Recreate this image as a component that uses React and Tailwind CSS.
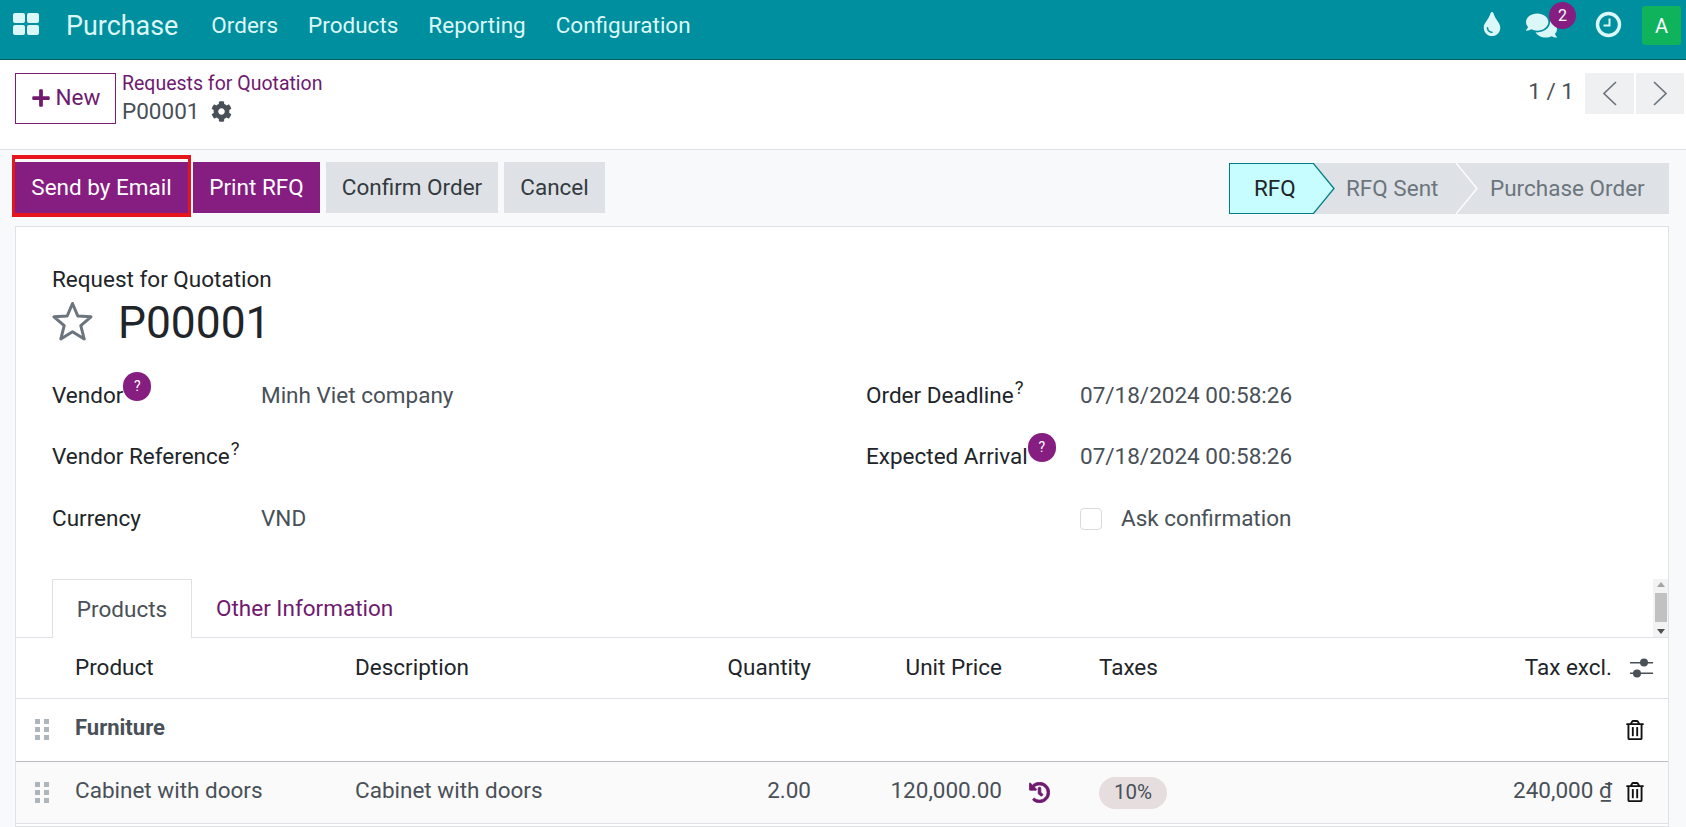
import React from "react";
import { FaPlus, FaCog, FaTint, FaComments, FaHistory, FaRegTrashAlt } from "react-icons/fa";

const Apps = () => (
  <svg width="26" height="22" viewBox="0 0 26 22" fill="#dcf7f7">
    <rect x="0" y="0" width="12" height="10" rx="2" />
    <rect x="14" y="0" width="12" height="10" rx="2" />
    <rect x="0" y="12" width="12" height="10" rx="2" />
    <rect x="14" y="12" width="12" height="10" rx="2" />
  </svg>
);

const Clock = () => (
  <svg width="27" height="27" viewBox="0 0 27 27" fill="none" stroke="#dcf7f7">
    <circle cx="13.5" cy="13.5" r="11" strokeWidth="3.4" />
    <path d="M14.5 7.5V14.5H8.5" strokeWidth="2" />
  </svg>
);

const Star = () => (
  <svg width="41" height="40" viewBox="0 0 41 40" fill="none" stroke="#6c757d" strokeWidth="3" strokeLinejoin="round">
    <path d="M20.5 2.5 25.8 15 39 15.8 28.8 24.6 32.2 38 20.5 30.8 8.8 38 12.2 24.6 2 15.8 15.2 15Z" />
  </svg>
);

const Handle = () => (
  <svg width="14" height="21" viewBox="0 0 14 21" fill="#adb5bd">
    <rect x="0" y="0" width="5" height="5" /><rect x="9" y="0" width="5" height="5" />
    <rect x="0" y="8" width="5" height="5" /><rect x="9" y="8" width="5" height="5" />
    <rect x="0" y="16" width="5" height="5" /><rect x="9" y="16" width="5" height="5" />
  </svg>
);

const Sliders = () => (
  <svg width="23" height="20" viewBox="0 0 23 20" fill="#495057">
    <rect x="0" y="4" width="23" height="1.5" />
    <rect x="0" y="14.5" width="23" height="1.5" />
    <circle cx="14" cy="4.5" r="4" />
    <circle cx="7" cy="15.5" r="4" />
  </svg>
);

const Chevron = ({ dir }) => (
  <svg width="15" height="25" viewBox="0 0 15 25" fill="none" stroke="#6c757d" strokeWidth="1.7">
    <path d={dir === "l" ? "M14 1 2 12.5 14 24" : "M1 1 13 12.5 1 24"} />
  </svg>
);

const Q = () => (
  <span className="absolute left-full top-[-10px] flex h-[29px] w-[28px] items-center justify-center rounded-full bg-[#861d80] text-[14px] text-white">?</span>
);

const Sup = () => <sup className="ml-[1px] text-[18.5px] leading-none">?</sup>;

const Btn = ({ children, primary, className = "" }) => (
  <button className={`flex h-[51px] items-center justify-center text-[22.5px] ${primary ? "bg-[#861d80] text-white" : "bg-[#dee2e6] text-[#343a40]"} ${className}`}>
    {children}
  </button>
);

const rowGrid = "grid grid-cols-[59px_280px_301px_155px_191px_97px_340px_173px_56px] items-center";

export default function App() {
  return (
    <div className="flex h-[827px] w-[1686px] flex-col overflow-hidden bg-white font-['Roboto',sans-serif] text-[22.5px] text-[#212529]">
      {/* Navbar */}
      <header className="flex h-[60px] shrink-0 items-center border-b border-[#00606a] bg-[#008f9e] text-[#dcf7f7]">
        <div className="ml-[13px] mb-[11px]"><Apps /></div>
        <span className="ml-[27px] mb-[6px] text-[26.9px]">Purchase</span>
        <nav className="ml-[33px] mb-[7px] flex gap-[30px]">
          <span>Orders</span><span>Products</span><span>Reporting</span><span>Configuration</span>
        </nav>
        <div className="ml-auto mr-[5px] flex items-center">
          <FaTint className="mb-[12px] text-[24px]" />
          <div className="relative ml-[22px]">
            <FaComments className="mb-[8px] text-[31px]" />
            <span className="absolute left-[23px] top-[-8px] flex h-[27px] w-[27px] items-center justify-center rounded-full bg-[#861d80] text-[16px] text-white">2</span>
          </div>
          <div className="ml-[38px] mb-[10px]"><Clock /></div>
          <span className="ml-[20px] mb-[8px] flex h-[39px] w-[39px] items-center justify-center rounded-[3px] bg-[#0fb35c] text-[20px] text-white">A</span>
        </div>
      </header>

      {/* Control panel */}
      <div className="flex h-[90px] shrink-0 border-b border-[#dee2e6] pl-[15px] pr-[2px] pt-[13px]">
        <button className="flex h-[51px] w-[101px] items-center justify-center gap-[5px] border border-[#7a1d75] pb-[2px] text-[#6f1a6f]">
          <FaPlus className="text-[20px]" />New
        </button>
        <div className="ml-[6px] flex flex-col">
          <span className="mt-[-3px] h-[27px] text-[19.5px] leading-[27px] text-[#6f1a6f]">Requests for Quotation</span>
          <span className="mt-[1px] flex items-center gap-[12px] leading-[27px] text-[#495057]">P00001 <FaCog className="text-[21px]" /></span>
        </div>
        <div className="ml-auto flex h-[41px] items-center gap-[2px] self-start pt-0 text-[#495057]">
          <span className="mr-[9px] mt-[-3px]">1 / 1</span>
          <span className="flex h-[41px] w-[49px] items-center justify-center bg-[#eff0f2]"><Chevron dir="l" /></span>
          <span className="flex h-[41px] w-[48px] items-center justify-center bg-[#eff0f2]"><Chevron dir="r" /></span>
        </div>
      </div>

      {/* Content */}
      <div className="flex flex-1 flex-col bg-[#f8f9fa]">
        {/* Action bar */}
        <div className="flex h-[76px] shrink-0 items-start pl-[15px] pr-[17px] pt-[12px]">
          <div className="flex gap-[6px]">
            <div className="relative">
              <Btn primary className="w-[173px]">Send by Email</Btn>
              <div className="absolute left-[-3px] right-[-3px] top-[-7px] bottom-[-4px] border-x-[3px] border-y-[4px] border-[#e8141c]" />
            </div>
            <Btn primary className="ml-[-1px] w-[127px]">Print RFQ</Btn>
            <Btn className="w-[172px]">Confirm Order</Btn>
            <Btn className="w-[101px]">Cancel</Btn>
          </div>
          <div className="ml-auto mt-[1px] flex h-[51px]">
            <div className="relative flex w-[84px] items-center border border-r-0 border-[#017e84] bg-[#c7fdff] pl-[24px]">
              RFQ
              <svg className="absolute left-full top-[-1px]" width="22" height="51" viewBox="0 0 22 51">
                <path d="M0 0 21 25.5 0 51Z" fill="#c7fdff" />
                <path d="M0 0 21 25.5 0 51" fill="none" stroke="#017e84" strokeWidth="1.3" />
              </svg>
            </div>
            <div className="flex w-[143px] items-center bg-[#dee2e6] pl-[33px] text-[#6c757d]">RFQ Sent</div>
            <div className="relative flex w-[213px] items-center bg-[#dee2e6] pl-[34px] text-[#6c757d]">
              Purchase Order
              <svg className="absolute left-0 top-0" width="22" height="51" viewBox="0 0 22 51">
                <path d="M0 0 21 25.5 0 51" fill="none" stroke="#ffffff" strokeWidth="1.3" />
              </svg>
            </div>
          </div>
        </div>

        {/* Sheet */}
        <div className="ml-[15px] w-[1654px] flex-1 border border-[#dee2e6] bg-white pt-[37px]">
          <div className="pl-[36px]">
            <div className="h-[30px] leading-[30px]">Request for Quotation</div>
            <div className="mt-[2px] flex h-[50px] items-center">
              <Star />
              <span className="ml-[25px] mt-[4px] text-[44.3px] leading-[50px]">P00001</span>
            </div>
          </div>

          <div className="mt-[19px] grid grid-cols-[209px_605px_214px_1fr] auto-rows-[61.5px] items-center pl-[36px]">
            <div><span className="relative">Vendor<Q /></span></div>
            <div className="text-[#495057]">Minh Viet company</div>
            <div>Order Deadline<Sup /></div>
            <div className="text-[#495057]">07/18/2024 00:58:26</div>

            <div>Vendor Reference<Sup /></div>
            <div />
            <div><span className="relative">Expected Arrival<Q /></span></div>
            <div className="text-[#495057]">07/18/2024 00:58:26</div>

            <div>Currency</div>
            <div className="text-[#495057]">VND</div>
            <div />
            <div className="flex items-center text-[#495057]">
              <span className="h-[22px] w-[22px] rounded-[4px] border border-[#d8dadd] bg-white" />
              <span className="ml-[19px]">Ask confirmation</span>
            </div>
          </div>

          {/* Tabs */}
          <div className="relative mt-[29px] flex h-[59px] border-b border-[#dee2e6] pl-[36px]">
            <div className="mb-[-1px] flex h-[59px] w-[140px] items-center justify-center border border-b-0 border-[#dee2e6] bg-white pt-[2px] text-[#495057]">Products</div>
            <div className="ml-[24px] flex items-center pt-[2px] text-[#6f1a6f]">Other Information</div>
            <div className="absolute bottom-0 right-0 flex h-[58px] w-[15px] flex-col items-center justify-between bg-[#f3f3f3] py-[3px]">
              <svg width="8" height="5" viewBox="0 0 8 5" fill="#a3a3a3"><path d="M4 0 8 5H0Z" /></svg>
              <span className="h-[29px] w-[12px] bg-[#c1c1c1]" />
              <svg width="8" height="5" viewBox="0 0 8 5" fill="#505050"><path d="M0 0H8L4 5Z" /></svg>
            </div>
          </div>

          {/* Table */}
          <div className={`${rowGrid} h-[61px] border-b border-[#dee2e6] pt-[1px]`}>
            <div />
            <div>Product</div>
            <div>Description</div>
            <div className="text-right">Quantity</div>
            <div className="text-right">Unit Price</div>
            <div />
            <div>Taxes</div>
            <div className="text-right">Tax excl.</div>
            <div className="flex justify-end pr-[15px]"><Sliders /></div>
          </div>

          <div className={`${rowGrid} h-[63px] border-b border-[#b9bcc0]`}>
            <div className="flex justify-center pl-[6px] pr-[14px]"><Handle /></div>
            <div className="col-span-6 mb-[4px] text-[22px] font-bold text-[#495057]">Furniture</div>
            <div />
            <div className="flex justify-end pr-[23px]"><FaRegTrashAlt className="text-[20px] text-[#111]" /></div>
          </div>

          <div className={`${rowGrid} h-[62px] border-b border-[#dee2e6] bg-[#fafafa] text-[#495057]`}>
            <div className="flex justify-center pl-[6px] pr-[14px]"><Handle /></div>
            <div className="mb-[2px]">Cabinet with doors</div>
            <div className="mb-[2px]">Cabinet with doors</div>
            <div className="mb-[2px] text-right">2.00</div>
            <div className="mb-[2px] text-right">120,000.00</div>
            <div className="pl-[27px]"><FaHistory className="text-[21px] text-[#6f1a6f]" stroke="currentColor" strokeWidth="20" /></div>
            <div>
              <span className="inline-flex h-[32px] w-[68px] items-center justify-center rounded-full bg-[#e6dede] text-[20.5px]">10%</span>
            </div>
            <div className="mb-[2px] whitespace-nowrap text-right">240,000 <span className="underline">₫</span></div>
            <div className="flex justify-end pr-[23px]"><FaRegTrashAlt className="text-[20px] text-[#111]" /></div>
          </div>
        </div>
      </div>
    </div>
  );
}
